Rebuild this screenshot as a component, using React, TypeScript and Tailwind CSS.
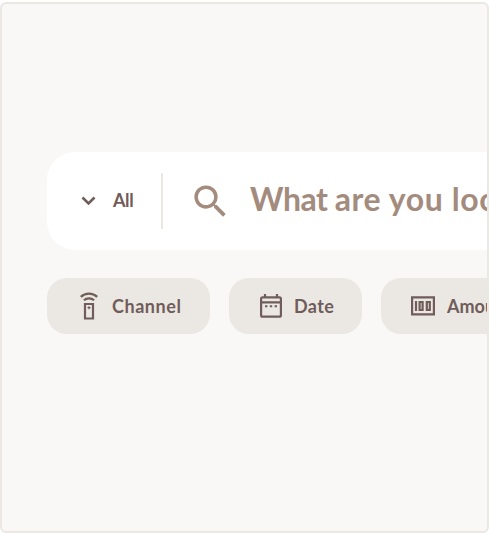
import React from "react";
import { MdSearch } from "react-icons/md";

function RemoteIcon() {
  return (
    <svg className="block h-7 w-[18px] shrink-0" viewBox="0 0 18 28" fill="none" stroke="currentColor" strokeWidth="2.2">
      <path d="M.8 4.9C5.3.5 12.7.5 17.2 4.9" />
      <path d="M3.9 8.3C6.6 5.8 11.4 5.8 14.1 8.3" />
      <path d="M5 12h8v14.5H5z" />
      <path d="M9 14.2v3M7.5 15.7h3" strokeWidth="1.2" />
    </svg>
  );
}

function DateIcon() {
  return (
    <svg className="block h-6 w-[22px] shrink-0" viewBox="0 0 22 24" fill="none" stroke="currentColor" strokeWidth="2.2">
      <rect x="1.1" y="3.3" width="19.8" height="19.4" rx="1.5" />
      <path d="M1 8.3h20M5 0v4M17 0v4" />
      <path d="M5 12.2h2.4M9.8 12.2h2.4M14.6 12.2h2.4" strokeWidth="2" />
    </svg>
  );
}

function AmountIcon() {
  return (
    <svg className="block h-5 w-6 shrink-0" viewBox="0 0 24 20" fill="none" stroke="currentColor" strokeWidth="2.2">
      <path d="M1.1 1.4h21.8v17H1.1z" />
      <path d="M5 5v10" />
      <path d="M8.6 6h3v8h-3zM15.8 6h3v8h-3z" strokeWidth="2.2" />
    </svg>
  );
}

function Chip({ icon, label, className }: { icon: React.ReactNode; label: string; className: string }) {
  return (
    <button className={`flex h-14 shrink-0 items-center rounded-[20px] bg-[#ebe8e3] text-left text-[18px] leading-6 font-bold ${className}`}>
      {icon}
      <span>{label}</span>
    </button>
  );
}

export default function App() {
  return (
    <div className="h-[533px] w-[490px] overflow-hidden bg-white pt-[2px] font-['Lato',sans-serif] text-[#705c5b]">
      <main className="h-[531px] w-[489px] overflow-hidden rounded-md border-2 border-[#ebe8e3] bg-[#f9f8f6] pt-[148px] pl-[45px]">
        <div className="flex h-[98px] w-[620px] items-center rounded-[28px] bg-white">
          <button className="flex h-full w-[114px] items-center pl-[34px] text-[18px] leading-6 font-bold">
            <svg className="mr-[17px] block h-[10px] w-[15px]" viewBox="0 0 15 10" fill="none" stroke="currentColor" strokeWidth="2.6">
              <path d="m1.5 1.5 6 6 6-6" />
            </svg>
            <span className="pb-0.5 tracking-[-0.4px]">All</span>
          </button>
          <div className="h-14 w-0.5 bg-[#ebe8e3]" />
          <div className="flex items-center pl-[26px] text-[#a38b7e]">
            <MdSearch className="size-[43px] shrink-0" />
            <span className="ml-[18px] pb-1 text-[32px] leading-10 font-bold whitespace-nowrap">
              <span className="tracking-[-0.5px]">What </span>
              <span className="tracking-[0.6px]">are you looking for?</span>
            </span>
          </div>
        </div>
        <div className="mt-7 flex gap-[19px]">
          <Chip icon={<RemoteIcon />} label="Channel" className="w-[163px] gap-[14px] pl-[33px] tracking-[0.55px]" />
          <Chip icon={<DateIcon />} label="Date" className="w-[133px] gap-[12px] pl-[31px] tracking-[0.4px]" />
          <Chip icon={<AmountIcon />} label="Amount" className="w-[163px] gap-[12px] pl-[30px]" />
        </div>
      </main>
    </div>
  );
}
